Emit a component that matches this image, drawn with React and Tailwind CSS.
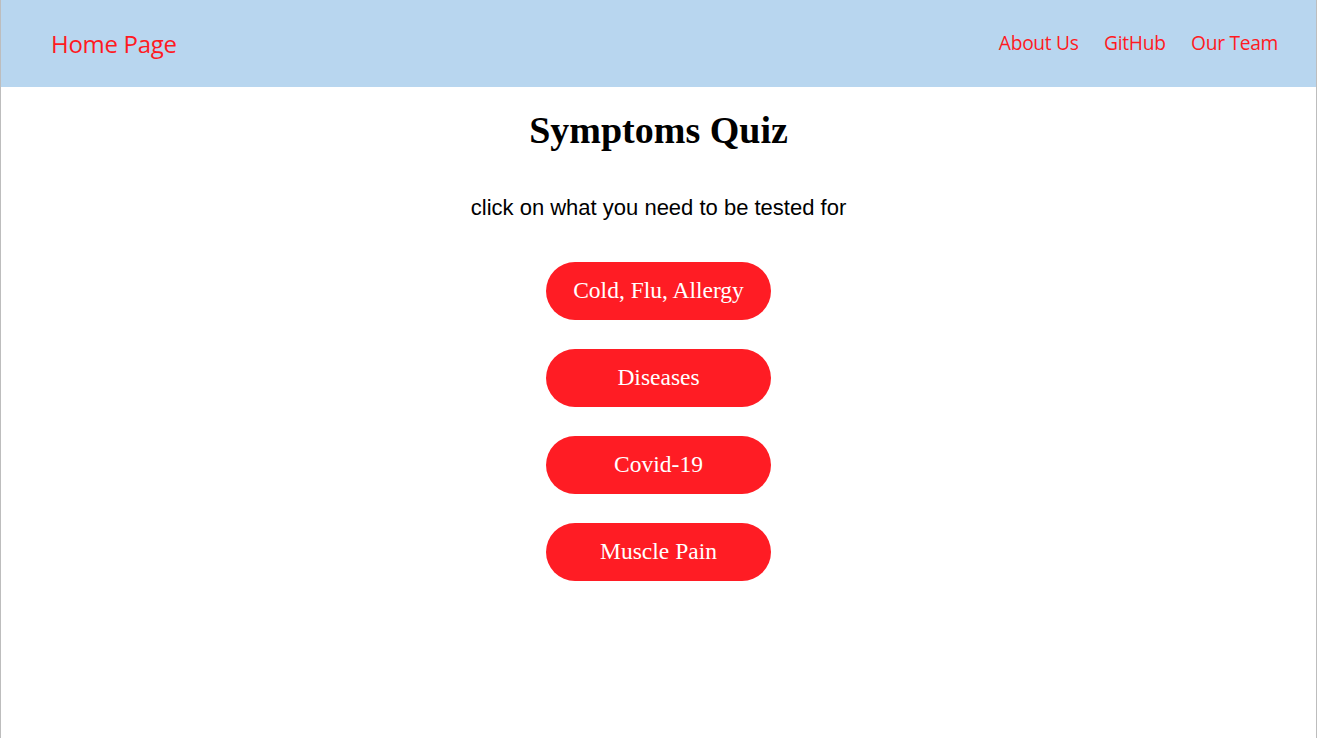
export default function App() {
  const items = ['Cold, Flu, Allergy', 'Diseases', 'Covid-19', 'Muscle Pain']

  return (
    <div className="w-[1317px] min-h-[738px] border-x border-[#bdbdbd] bg-white">
      {/* navbar */}
      <nav className="h-[87px] bg-[#b8d6ef] flex items-center justify-between pl-[50px] pr-[38px] font-['Open_Sans',sans-serif] text-[#ff1a22]">
        <a className="text-[24px] tracking-[-0.3px]">Home Page</a>
        <div className="flex items-center gap-[25.5px] text-[19.2px] tracking-[-0.3px]">
          <a>About Us</a>
          <a>GitHub</a>
          <a>Our Team</a>
        </div>
      </nav>

      <main className="flex flex-col items-center">
        <h1 className="mt-[20px] text-[38px] leading-[46px] font-bold font-['Liberation_Serif',serif] text-black">
          Symptoms Quiz
        </h1>
        <p className="mt-[43px] text-[22px] leading-[24px] font-['Liberation_Sans',Arial,sans-serif] text-black">
          click on what you need to be tested for
        </p>

        <div className="mt-[42px] flex flex-col gap-[29px]">
          {items.map(label => (
            <button
              key={label}
              className="w-[225px] h-[58px] rounded-full bg-[#ff1c24] text-white text-[23.5px] font-['Liberation_Serif',serif]"
            >
              {label}
            </button>
          ))}
        </div>
      </main>
    </div>
  )
}
